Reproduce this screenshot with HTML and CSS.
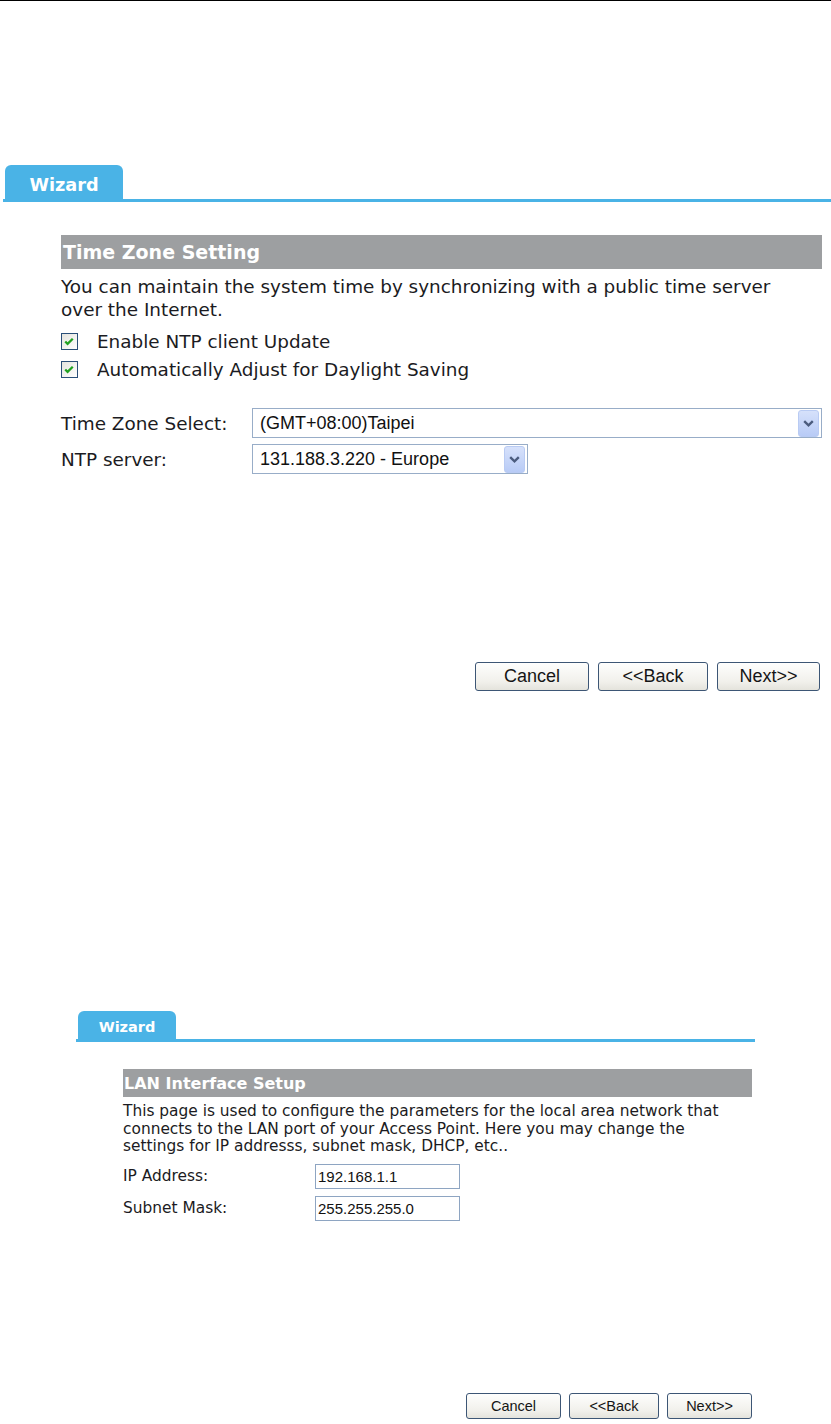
FILE: index.html
```html
<!DOCTYPE html>
<html lang="en">
<head>
<meta charset="utf-8">
<title>Wizard</title>
<link rel="stylesheet" href="styles.css">
</head>
<body>
<div class="topline"></div>

<section class="shot shot-lg">
  <div class="tabbar"><div class="tab">Wizard</div></div>
  <div class="content">
    <div class="title">Time Zone Setting</div>
    <p class="desc">You can maintain the system time by synchronizing with a public time server<br>over the Internet.</p>
    <label class="check first">
      <span class="box"><svg width="17" height="17" viewBox="0 0 17 17"><polyline points="4.5,8.5 7,11 12.5,5.5" fill="none" stroke="#21a121" stroke-width="2.4"/></svg></span>
      <span>Enable NTP client Update</span>
    </label>
    <label class="check">
      <span class="box"><svg width="17" height="17" viewBox="0 0 17 17"><polyline points="4.5,8.5 7,11 12.5,5.5" fill="none" stroke="#21a121" stroke-width="2.4"/></svg></span>
      <span>Automatically Adjust for Daylight Saving</span>
    </label>
    <div class="form">
      <span class="lbl">Time Zone Select:</span>
      <div class="select wide"><span class="val">(GMT+08:00)Taipei</span><span class="arrow"><svg width="11" height="7" viewBox="0 0 11 7"><polyline points="1.2,1.2 5.5,5.3 9.8,1.2" fill="none" stroke="#4b5c7e" stroke-width="2.4"/></svg></span></div>
      <span class="lbl">NTP server:</span>
      <div class="select narrow"><span class="val">131.188.3.220 - Europe</span><span class="arrow"><svg width="11" height="7" viewBox="0 0 11 7"><polyline points="1.2,1.2 5.5,5.3 9.8,1.2" fill="none" stroke="#4b5c7e" stroke-width="2.4"/></svg></span></div>
    </div>
    <div class="buttons">
      <button class="btn b-cancel">Cancel</button>
      <button class="btn b-back">&lt;&lt;Back</button>
      <button class="btn b-next">Next&gt;&gt;</button>
    </div>
  </div>
</section>

<section class="shot shot-sm">
  <div class="tabbar"><div class="tab">Wizard</div></div>
  <div class="content">
    <div class="title">LAN Interface Setup</div>
    <p class="desc">This page is used to configure the parameters for the local area network that<br>connects to the LAN port of your Access Point. Here you may change the<br>settings for IP addresss, subnet mask, DHCP, etc..</p>
    <div class="form">
      <span class="lbl">IP Address:</span>
      <input class="field" type="text" value="192.168.1.1">
      <span class="lbl">Subnet Mask:</span>
      <input class="field" type="text" value="255.255.255.0">
    </div>
    <div class="buttons">
      <button class="btn b-cancel">Cancel</button>
      <button class="btn b-back">&lt;&lt;Back</button>
      <button class="btn b-next">Next&gt;&gt;</button>
    </div>
  </div>
</section>
</body>
</html>
```
FILE: styles.css
```css
html, body {
  margin: 0;
  padding: 0;
  background: #ffffff;
}
body {
  font-family: "DejaVu Sans", Verdana, sans-serif;
  color: #1b1b22;
}
.topline {
  height: 1px;
  background: #000;
}

/* shared */
.tabbar {
  display: flex;
  padding-left: 2px;
  border-bottom: 3px solid #4ab3e6;
}
.tab {
  box-sizing: border-box;
  background: #4ab3e6;
  color: #fff;
  font-weight: bold;
  border-radius: 6px 6px 0 0;
  display: flex;
  justify-content: center;
  align-items: center;
}
.title {
  background: #9d9fa1;
  color: #fff;
  font-weight: bold;
  white-space: nowrap;
  overflow: hidden;
}
.desc {
  margin: 0;
}
.check {
  display: flex;
  align-items: center;
}
.box {
  box-sizing: border-box;
  display: inline-flex;
  width: 17px;
  height: 17px;
  border: 1px solid #2a4f78;
  background: linear-gradient(135deg, #e4e4de, #ffffff);
}
.box svg {
  margin: -1px 0 0 -1px;
}
.form {
  display: grid;
  align-items: center;
}
.select {
  box-sizing: border-box;
  display: flex;
  align-items: center;
  border: 1px solid #98adc8;
  background: #fff;
  font-family: "Liberation Sans", Arial, sans-serif;
  color: #111;
  padding: 0 2px 0 7px;
}
.select .val {
  flex: 1;
  white-space: nowrap;
}
.arrow {
  box-sizing: border-box;
  display: flex;
  align-items: center;
  justify-content: center;
  width: 21px;
  border: 1px solid #b9cbf3;
  border-radius: 3px;
  background: linear-gradient(#d6e1fb, #b8cbf6);
}
.field {
  box-sizing: border-box;
  border: 1px solid #8ea5c2;
  background: #fff;
  font-family: "Liberation Sans", Arial, sans-serif;
  color: #111;
  padding: 0 2px;
  margin: 0;
  outline: none;
}
.buttons {
  display: flex;
  justify-content: flex-end;
}
.btn {
  box-sizing: border-box;
  font-family: "Liberation Sans", Arial, sans-serif;
  color: #151515;
  border: 1px solid #3d5675;
  border-radius: 3px;
  background: linear-gradient(#fefefd, #f1f0eb 70%, #e4e3dc);
  padding: 0;
  margin: 0;
}

/* large screenshot */
.shot-lg {
  margin-left: 3px;
  padding-top: 164px;
}
.shot-lg .tab {
  width: 118px;
  height: 34px;
  padding-top: 6px;
  font-size: 17.7px;
}
.shot-lg .content {
  padding: 33px 9px 0 58px;
}
.shot-lg .title {
  height: 34px;
  line-height: 34px;
  font-size: 19px;
  padding-left: 2px;
}
.shot-lg .desc {
  margin-top: 6px;
  font-size: 18.4px;
  line-height: 23px;
}
.shot-lg .check {
  height: 28px;
  gap: 19px;
  font-size: 18.4px;
}
.shot-lg .check.first {
  margin-top: 6px;
}
.shot-lg .form {
  margin-top: 25px;
  grid-template-columns: 191px 1fr;
  row-gap: 6px;
  font-size: 18.4px;
}
.shot-lg .select {
  height: 30px;
  font-size: 18px;
}
.shot-lg .select.narrow {
  width: 276px;
}
.shot-lg .arrow {
  height: 27px;
}
.shot-lg .buttons {
  margin-top: 188px;
  padding-right: 2px;
  gap: 9px;
}
.shot-lg .btn {
  height: 29px;
  font-size: 18px;
}
.shot-lg .b-cancel { width: 114px; }
.shot-lg .b-back { width: 110px; }
.shot-lg .b-next { width: 103px; }

/* small screenshot */
.shot-sm {
  margin: 320px 0 0 76px;
  width: 679px;
}
.shot-sm .tab {
  width: 98px;
  height: 28px;
  padding-top: 4px;
  font-size: 14.5px;
}
.shot-sm .content {
  padding: 27px 3px 0 47px;
}
.shot-sm .title {
  height: 28px;
  line-height: 30px;
  font-size: 16px;
  padding-left: 1px;
}
.shot-sm .desc {
  margin-top: 6px;
  font-size: 15.4px;
  line-height: 17.5px;
}
.shot-sm .form {
  margin-top: 8px;
  grid-template-columns: 192px 145px;
  row-gap: 7px;
  font-size: 15.4px;
}
.shot-sm .field {
  width: 145px;
  height: 25px;
  font-size: 15px;
}
.shot-sm .buttons {
  margin-top: 172px;
  gap: 8px;
}
.shot-sm .btn {
  height: 26px;
  font-size: 14.5px;
}
.shot-sm .b-cancel { width: 95px; }
.shot-sm .b-back { width: 90px; }
.shot-sm .b-next { width: 85px; }
```
